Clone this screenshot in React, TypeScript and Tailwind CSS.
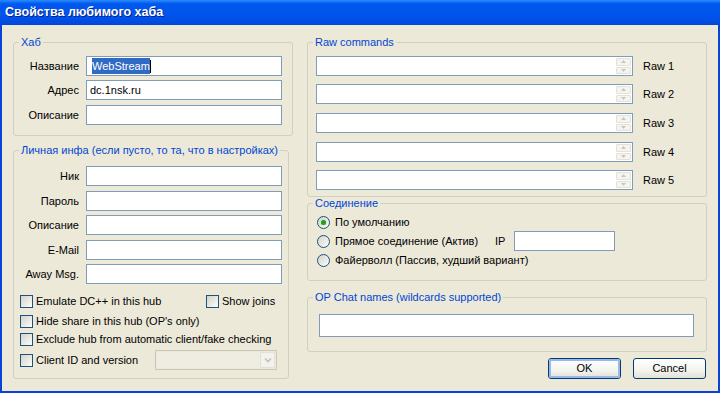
import React from 'react';

function GroupBox({
	title,
	className,
	innerClassName,
	children,
}: {
	title: string;
	className?: string;
	innerClassName?: string;
	children: React.ReactNode;
}) {
	return (
		<fieldset className={`border border-[#D0D0BF] rounded-[3px] ${className ?? ''}`}>
			<legend className="ml-[5px] px-[2px] leading-[13px] text-[#0046D5]">{title}</legend>
			<div className={innerClassName}>{children}</div>
		</fieldset>
	);
}

function TextBox({
	className,
	children,
}: {
	className?: string;
	children?: React.ReactNode;
}) {
	return (
		<div
			className={`relative flex h-[20px] items-center border border-[#7F9DB9] bg-white px-[3px] ${className ?? ''}`}
		>
			{children}
		</div>
	);
}

function FieldRow({ label, className, children }: { label: string; className?: string; children?: React.ReactNode }) {
	return (
		<div className={`flex items-center ${className ?? ''}`}>
			<span className="w-[65px] text-right">{label}</span>
			<TextBox className="ml-[7px] w-[196px]">{children}</TextBox>
		</div>
	);
}

function CheckBox({ label, className }: { label: string; className?: string }) {
	return (
		<div className={`flex h-[16px] items-center ${className ?? ''}`}>
			<span className="h-[13px] w-[13px] shrink-0 border border-[#1C5180] bg-[linear-gradient(135deg,#D4D3CB,#F4F4F0_80%,#FFFFFF)]" />
			<span className="ml-[3px] whitespace-nowrap">{label}</span>
		</div>
	);
}

function Radio({ checked }: { checked?: boolean }) {
	return (
		<span className="flex h-[13px] w-[13px] shrink-0 items-center justify-center rounded-full border border-[#1C5180] bg-[linear-gradient(135deg,#D4D3CB,#F4F4F0_80%,#FFFFFF)]">
			{checked && <span className="h-[5px] w-[5px] rounded-full bg-[#21A121] shadow-[0_0_1px_#5ED35E]" />}
		</span>
	);
}

function SpinBox() {
	return (
		<div className="absolute right-[1px] top-[1px] flex h-[16px] w-[15px] flex-col gap-[1px]">
			{[0, 1].map((i) => (
				<div
					key={i}
					className="flex h-[8px] items-center justify-center rounded-[1px] border border-[#E3E1D8] bg-[#F5F4F0]"
				>
					<svg width="5" height="3" viewBox="0 0 5 3">
						<path d={i === 0 ? 'M0 3 L2.5 0 L5 3 Z' : 'M0 0 L2.5 3 L5 0 Z'} fill="#C9C7BD" />
					</svg>
				</div>
			))}
		</div>
	);
}

function Button({ label, isDefault }: { label: string; isDefault?: boolean }) {
	return (
		<div className="flex h-[21px] w-[73px] items-center justify-center rounded-[3px] border border-[#003C74] bg-[linear-gradient(#FFFFFF,#F3F3EF_60%,#E3E1D6)]">
			<div
				className={`flex h-full w-full items-center justify-center rounded-[2px] ${
					isDefault ? 'border-2 border-[#9DB7E8]' : ''
				}`}
			>
				{label}
			</div>
		</div>
	);
}

export default function App() {
	const raws = ['Raw 1', 'Raw 2', 'Raw 3', 'Raw 4', 'Raw 5'];
	const rawGaps = ['', 'mt-[8px]', 'mt-[9px]', 'mt-[9px]', 'mt-[8px]'];

	return (
		<div className="flex h-[393px] w-[720px] flex-col overflow-hidden font-['Liberation_Sans',Arial,sans-serif] text-[11px] text-black">
			<div className="flex h-[25px] shrink-0 items-center bg-[linear-gradient(#2C8CFF,#0058EE_15%,#0054EC_60%,#0048DC)] pl-[5px]">
				<span className="text-[12.5px] font-bold text-white [text-shadow:1px_1px_#0A1E8C]">
					Свойства любимого хаба
				</span>
			</div>
			<div className="flex flex-1 border-x-2 border-b-2 border-[#0842D6] bg-[#ECE9D8] pl-[11px] pt-[11px]">
				{/* left column */}
				<div className="flex w-[280px] flex-col">
					<GroupBox title="Хаб" className="w-[280px]" innerClassName="pt-[7px] pb-[10px]">
						<FieldRow label="Название">
							<span className="ml-[2px] bg-[#316AC5] text-white">WebStream</span>
							<span className="h-[13px] w-[1px] bg-black" />
						</FieldRow>
						<FieldRow label="Адрес" className="mt-[4px]">
							dc.1nsk.ru
						</FieldRow>
						<FieldRow label="Описание" className="mt-[5px]" />
					</GroupBox>

					<GroupBox
						title="Личная инфа (если пусто, то та, что в настройках)"
						className="mt-[8px] w-[276px]"
						innerClassName="pt-[9px] pb-[8px]"
					>
						<FieldRow label="Ник" />
						<FieldRow label="Пароль" className="mt-[5px]" />
						<FieldRow label="Описание" className="mt-[4px]" />
						<FieldRow label="E-Mail" className="mt-[5px]" />
						<FieldRow label="Away Msg." className="mt-[4px]" />

						<div className="mt-[9px] flex pl-[6px]">
							<CheckBox label="Emulate DC++ in this hub" className="w-[186px]" />
							<CheckBox label="Show joins" />
						</div>
						<CheckBox label="Hide share in this hub (OP's only)" className="mt-[4px] pl-[6px]" />
						<CheckBox label="Exclude hub from automatic client/fake checking" className="mt-[2px] pl-[6px]" />
						<div className="mt-[3px] flex h-[20px] items-center pl-[6px]">
							<CheckBox label="Client ID and version" className="w-[135px]" />
							<div className="flex h-[20px] w-[122px] items-center border border-[#C9C7BA] bg-[#ECE9D8] p-[1px]">
								<div className="h-full flex-1 bg-[#EFEDE2]" />
								<div className="flex h-full w-[15px] items-center justify-center rounded-[2px] border border-[#E3E1D6] bg-[#F3F2EC]">
									<svg width="8" height="6" viewBox="0 0 8 6">
										<path d="M1 1.5 L4 4.5 L7 1.5" stroke="#C4C2B6" strokeWidth="1.6" fill="none" />
									</svg>
								</div>
							</div>
						</div>
					</GroupBox>
				</div>

				{/* right column */}
				<div className="ml-[14px] flex w-[400px] flex-col">
					<GroupBox title="Raw commands" className="w-[400px]" innerClassName="pl-[8px] pt-[7px] pb-[6px]">
						{raws.map((r, i) => (
							<div key={r} className={`flex items-center ${rawGaps[i]}`}>
								<TextBox className="w-[317px]">
									<SpinBox />
								</TextBox>
								<span className="ml-[10px]">{r}</span>
							</div>
						))}
					</GroupBox>

					<GroupBox title="Соединение" className="w-[400px]" innerClassName="pl-[9px] pt-[4px] pb-[12px]">
						<div className="flex h-[16px] items-center">
							<Radio checked />
							<span className="ml-[5px]">По умолчанию</span>
						</div>
						<div className="mt-[1px] flex h-[20px] items-center">
							<Radio />
							<span className="ml-[5px] w-[160px]">Прямое соединение (Актив)</span>
							<span className="w-[19px]">IP</span>
							<TextBox className="w-[101px]" />
						</div>
						<div className="mt-[1px] flex h-[16px] items-center">
							<Radio />
							<span className="ml-[5px]">Файерволл (Пассив, худший вариант)</span>
						</div>
					</GroupBox>

					<GroupBox
						title="OP Chat names (wildcards supported)"
						className="mt-[10px] w-[400px]"
						innerClassName="pl-[11px] pt-[10px] pb-[14px]"
					>
						<TextBox className="h-[23px] w-[375px]" />
					</GroupBox>

					<div className="mt-[6px] flex justify-end gap-[12px] pr-[1px]">
						<Button label="OK" isDefault />
						<Button label="Cancel" />
					</div>
				</div>
			</div>
		</div>
	);
}
